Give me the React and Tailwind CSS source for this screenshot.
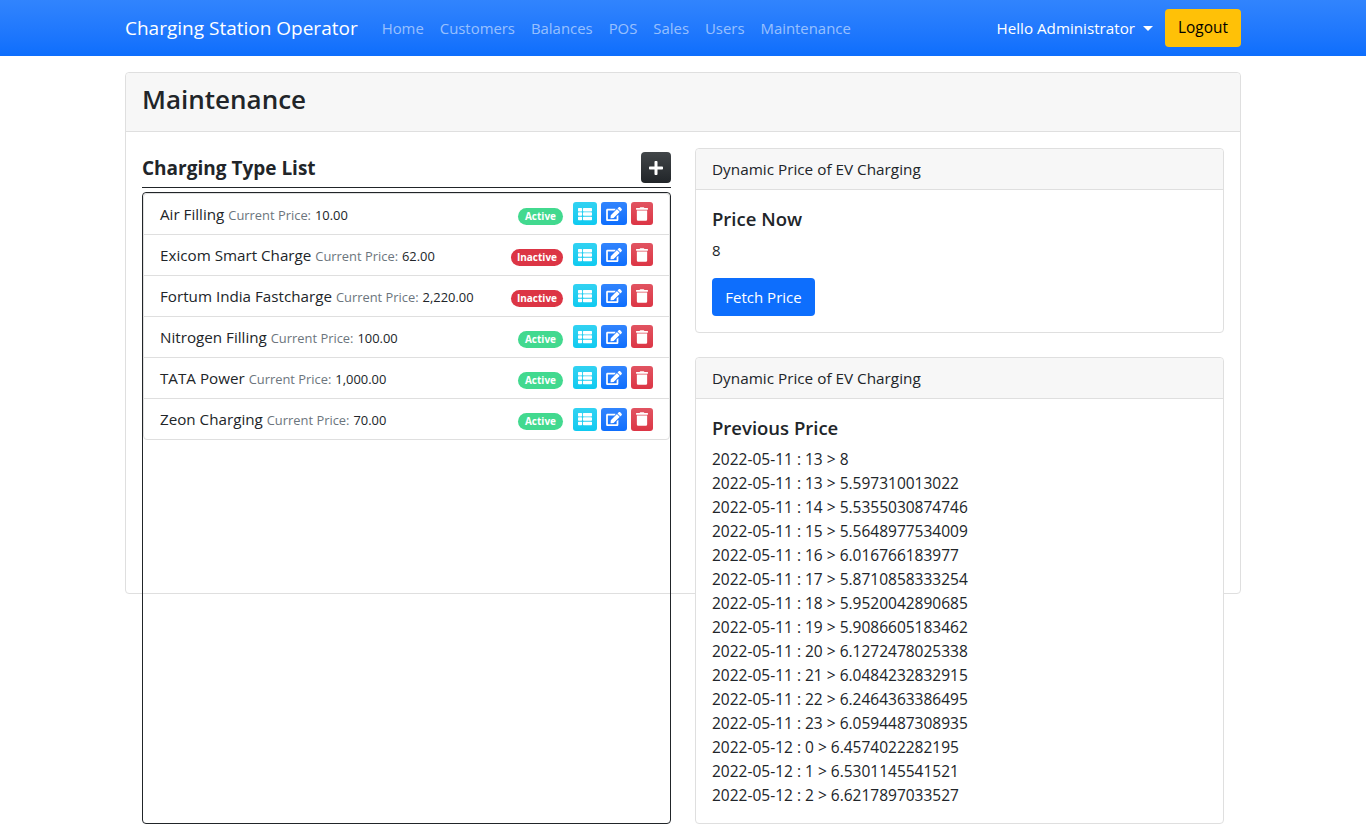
import React from 'react';

const font = 'font-["Open_Sans","Noto_Sans",sans-serif]';

const navLinks = ['Home', 'Customers', 'Balances', 'POS', 'Sales', 'Users', 'Maintenance'];

const chargingTypes = [
  { name: 'Air Filling', price: '10.00', active: true },
  { name: 'Exicom Smart Charge', price: '62.00', active: false },
  { name: 'Fortum India Fastcharge', price: '2,220.00', active: false },
  { name: 'Nitrogen Filling', price: '100.00', active: true },
  { name: 'TATA Power', price: '1,000.00', active: true },
  { name: 'Zeon Charging', price: '70.00', active: true },
];

const previousPrices = [
  '2022-05-11 : 13 > 8',
  '2022-05-11 : 13 > 5.597310013022',
  '2022-05-11 : 14 > 5.5355030874746',
  '2022-05-11 : 15 > 5.5648977534009',
  '2022-05-11 : 16 > 6.016766183977',
  '2022-05-11 : 17 > 5.8710858333254',
  '2022-05-11 : 18 > 5.9520042890685',
  '2022-05-11 : 19 > 5.9086605183462',
  '2022-05-11 : 20 > 6.1272478025338',
  '2022-05-11 : 21 > 6.0484232832915',
  '2022-05-11 : 22 > 6.2464363386495',
  '2022-05-11 : 23 > 6.0594487308935',
  '2022-05-12 : 0 > 6.4574022282195',
  '2022-05-12 : 1 > 6.5301145541521',
  '2022-05-12 : 2 > 6.6217897033527',
];

const ListIcon = () => (
  <svg viewBox="0 0 512 512" className="w-[14px] h-[14px]" fill="currentColor">
    <path d="M149.3 216v80c0 13.3-10.7 24-24 24H24c-13.3 0-24-10.7-24-24v-80c0-13.3 10.7-24 24-24h101.3c13.3 0 24 10.7 24 24zM0 376v80c0 13.3 10.7 24 24 24h101.3c13.3 0 24-10.7 24-24v-80c0-13.3-10.7-24-24-24H24c-13.3 0-24 10.7-24 24zM125.300 32H24C10.700 32 0 42.700 0 56v80c0 13.300 10.700 24 24 24h101.300c13.300 0 24-10.700 24-24V56c0-13.300-10.700-24-24-24zm80 448H488c13.300 0 24-10.700 24-24v-80c0-13.300-10.700-24-24-24H205.300c-13.300 0-24 10.700-24 24v80c0 13.300 10.700 24 24 24zm-24-424v80c0 13.300 10.700 24 24 24H488c13.300 0 24-10.700 24-24V56c0-13.300-10.700-24-24-24H205.300c-13.300 0-24 10.700-24 24zm24 264H488c13.300 0 24-10.700 24-24v-80c0-13.300-10.700-24-24-24H205.300c-13.300 0-24 10.700-24 24v80c0 13.300 10.700 24 24 24z" />
  </svg>
);

const EditIcon = () => (
  <svg viewBox="0 0 576 512" className="w-[16px] h-[14px]" fill="currentColor">
    <path d="M402.600 83.200l90.200 90.200c3.800 3.800 3.800 10 0 13.800L274.400 405.600l-92.800 10.300c-12.400 1.400-22.900-9.100-21.500-21.500l10.300-92.800L388.800 83.200c3.800-3.800 10-3.800 13.800 0zm162-22.900l-48.800-48.800c-15.200-15.200-39.900-15.200-55.200 0l-35.400 35.400c-3.800 3.800-3.800 10 0 13.800l90.200 90.200c3.800 3.800 10 3.800 13.800 0l35.400-35.400c15.200-15.300 15.200-40 0-55.200zM384 346.200V448H64V128h229.800c3.200 0 6.200-1.300 8.500-3.500l40-40c7.600-7.600 2.200-20.500-8.500-20.500H48C21.500 64 0 85.500 0 112v352c0 26.500 21.500 48 48 48h352c26.500 0 48-21.500 48-48V306.200c0-10.700-12.900-16-20.500-8.500l-40 40c-2.200 2.300-3.500 5.300-3.500 8.500z" />
  </svg>
);

const TrashIcon = () => (
  <svg viewBox="0 0 448 512" className="w-[12px] h-[14px]" fill="currentColor">
    <path d="M32 464a48 48 0 0 0 48 48h288a48 48 0 0 0 48-48V128H32zM432 32H312l-9.400-18.700A24 24 0 0 0 281.100 0H166.800a23.700 23.700 0 0 0-21.400 13.300L136 32H16A16 16 0 0 0 0 48v32a16 16 0 0 0 16 16h416a16 16 0 0 0 16-16V48a16 16 0 0 0-16-16z" />
  </svg>
);

const PlusIcon = () => (
  <svg viewBox="0 0 448 512" className="w-[14px] h-[16px]" fill="currentColor">
    <path d="M416 208H272V64c0-17.700-14.300-32-32-32h-32c-17.700 0-32 14.300-32 32v144H32c-17.700 0-32 14.300-32 32v32c0 17.700 14.300 32 32 32h144v144c0 17.700 14.300 32 32 32h32c17.700 0 32-14.300 32-32V304h144c17.700 0 32-14.300 32-32v-32c0-17.700-14.300-32-32-32z" />
  </svg>
);

const ChargingRow = ({ item, last }) => (
  <div className={`flex items-center px-[16px] ${last ? 'h-[40px]' : 'h-[41px] border-b border-[#dfdfdf]'}`}>
    <div className="flex-1 whitespace-nowrap text-[15.2px] text-[#212529]">
      {item.name}{' '}
      <small className="text-[12.9px] text-[#6c757d]">Current Price:</small>{' '}
      <small className="text-[12.9px]">{item.price}</small>
    </div>
    {item.active ? (
      <span className="mr-[10px] mt-[4px] h-[17px] px-[7px] rounded-full bg-[#42d98f] text-white text-[10px] font-bold leading-[17px]">Active</span>
    ) : (
      <span className="mr-[10px] mt-[4px] h-[17px] px-[6px] rounded-full bg-[#dc3545] text-white text-[10px] font-bold leading-[17px]">Inactive</span>
    )}
    <div className={`flex gap-[4px] ${last ? '' : 'mb-[1px]'}`}>
      <button className="w-[24px] h-[23px] rounded-[3px] flex items-center justify-center text-white bg-gradient-to-b from-[#31d2f2] to-[#0dcaf0]"><ListIcon /></button>
      <button className="w-[26px] h-[23px] rounded-[3px] flex items-center justify-center text-white bg-gradient-to-b from-[#3184fd] to-[#0d6efd]"><EditIcon /></button>
      <button className="w-[22px] h-[23px] rounded-[3px] flex items-center justify-center text-white bg-gradient-to-b from-[#e15361] to-[#dc3545]"><TrashIcon /></button>
    </div>
  </div>
);

const PanelHeader = () => (
  <div className="h-[41px] flex items-center px-[16px] bg-[#f7f7f7] border-b border-[#dfdfdf] rounded-t-[4px] text-[15.3px] text-[#212529]">
    Dynamic Price of EV Charging
  </div>
);

export default function App() {
  return (
    <div className={`${font} text-[15px] text-[#212529] bg-white h-[840px] overflow-hidden`}>
      <nav className="h-[56px] bg-gradient-to-b from-[#3184fd] to-[#0d6efd]">
        <div className="w-[1116px] mx-auto h-full flex items-center">
          <span className="text-[19px] text-white mr-[24px]">Charging Station Operator</span>
          <div className="flex gap-[16px] text-[14.9px] text-[rgba(255,255,255,0.55)]">
            {navLinks.map((link) => (
              <span key={link}>{link}</span>
            ))}
          </div>
          <div className="ml-auto flex items-center">
            <span className="text-[15.2px] text-white">Hello Administrator</span>
            <span className="ml-[8px] mr-[12px] w-0 h-0 border-x-[5px] border-x-transparent border-t-[5px] border-t-white" />
            <button className="w-[76px] h-[38px] rounded-[4px] bg-[#ffc107] text-[15.4px] text-black">Logout</button>
          </div>
        </div>
      </nav>

      <main className="w-[1116px] mx-auto mt-[16px] h-[522px] border border-[#dfdfdf] rounded-[4px]">
        <div className="h-[59px] bg-[#f7f7f7] border-b border-[#dfdfdf] rounded-t-[4px] flex items-center px-[16px] pb-[5px]">
          <h1 className="text-[26px] font-semibold">Maintenance</h1>
        </div>
        <div className="flex gap-[24px] px-[16px] pt-[16px]">
          <section className="w-[529px] shrink-0">
            <div className="h-[40px] flex items-center justify-between border-b border-[#212529]">
              <h5 className="pt-[1px] text-[19px] font-bold">Charging Type List</h5>
              <button className="self-end mb-[4px] w-[30px] h-[31px] rounded-[4px] flex items-center justify-center text-white bg-gradient-to-b from-[#424649] to-[#212529]"><PlusIcon /></button>
            </div>
            <div className="mt-[4px] h-[632px] border border-[#212529] rounded-[4px]">
              <div className="border border-[#dfdfdf] rounded-[4px]">
                {chargingTypes.map((item, i) => (
                  <ChargingRow key={item.name} item={item} last={i === chargingTypes.length - 1} />
                ))}
              </div>
            </div>
          </section>

          <section className="w-[529px] shrink-0 flex flex-col gap-[24px]">
            <div className="border border-[#dfdfdf] rounded-[4px] bg-white">
              <PanelHeader />
              <div className="p-[16px]">
                <h5 className="text-[18.5px] font-semibold leading-[24px] mt-[1px] mb-[7px]">Price Now</h5>
                <p className="leading-[24px] mb-[16px]">8</p>
                <button className="w-[103px] h-[38px] rounded-[4px] bg-[#0d6efd] text-white">Fetch Price</button>
              </div>
            </div>
            <div className="border border-[#dfdfdf] rounded-[4px] bg-white">
              <PanelHeader />
              <div className="p-[16px]">
                <h5 className="text-[18.5px] font-semibold leading-[24px] mt-[1px] mb-[7px]">Previous Price</h5>
                {previousPrices.map((row) => (
                  <div key={row} className="text-[15.5px] leading-[24px]">{row}</div>
                ))}
              </div>
            </div>
          </section>
        </div>
      </main>
    </div>
  );
}
